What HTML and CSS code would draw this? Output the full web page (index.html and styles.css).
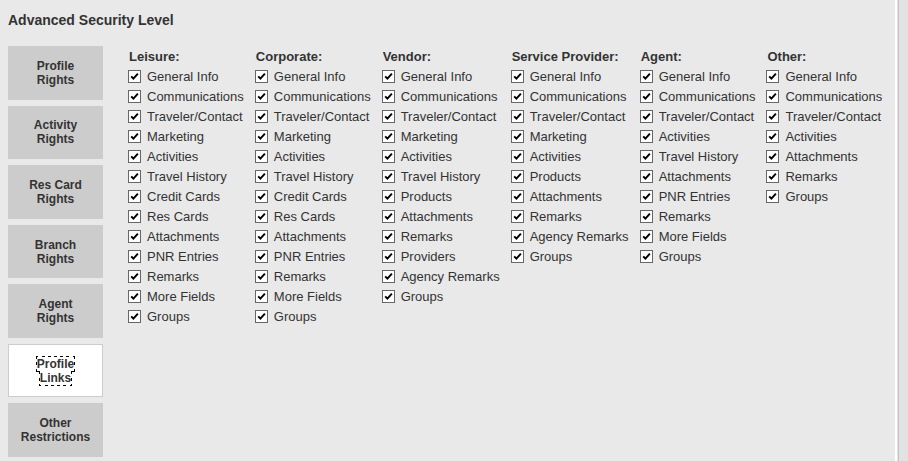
FILE: index.html
```
<!DOCTYPE html>
<html lang="en">
<head>
<meta charset="utf-8">
<title>Advanced Security Level</title>
<link rel="stylesheet" href="styles.css">
</head>
<body>
<main class="panel">
<h1 class="title">Advanced Security Level</h1>
<div class="content">
<nav class="tabs">
<button type="button" class="tab"><span>Profile<br>Rights</span></button>
<button type="button" class="tab"><span>Activity<br>Rights</span></button>
<button type="button" class="tab"><span>Res Card<br>Rights</span></button>
<button type="button" class="tab"><span>Branch<br>Rights</span></button>
<button type="button" class="tab"><span>Agent<br>Rights</span></button>
<button type="button" class="tab tab-active"><span><span class="focus-text">Profile<br>Links</span></span></button>
<button type="button" class="tab"><span>Other<br>Restrictions</span></button>
</nav>
<form class="groups">
<fieldset class="group">
<legend>Leisure:</legend>
<label><input type="checkbox" checked>General Info</label>
<label><input type="checkbox" checked>Communications</label>
<label><input type="checkbox" checked>Traveler/Contact</label>
<label><input type="checkbox" checked>Marketing</label>
<label><input type="checkbox" checked>Activities</label>
<label><input type="checkbox" checked>Travel History</label>
<label><input type="checkbox" checked>Credit Cards</label>
<label><input type="checkbox" checked>Res Cards</label>
<label><input type="checkbox" checked>Attachments</label>
<label><input type="checkbox" checked>PNR Entries</label>
<label><input type="checkbox" checked>Remarks</label>
<label><input type="checkbox" checked>More Fields</label>
<label><input type="checkbox" checked>Groups</label>
</fieldset>
<fieldset class="group">
<legend>Corporate:</legend>
<label><input type="checkbox" checked>General Info</label>
<label><input type="checkbox" checked>Communications</label>
<label><input type="checkbox" checked>Traveler/Contact</label>
<label><input type="checkbox" checked>Marketing</label>
<label><input type="checkbox" checked>Activities</label>
<label><input type="checkbox" checked>Travel History</label>
<label><input type="checkbox" checked>Credit Cards</label>
<label><input type="checkbox" checked>Res Cards</label>
<label><input type="checkbox" checked>Attachments</label>
<label><input type="checkbox" checked>PNR Entries</label>
<label><input type="checkbox" checked>Remarks</label>
<label><input type="checkbox" checked>More Fields</label>
<label><input type="checkbox" checked>Groups</label>
</fieldset>
<fieldset class="group">
<legend>Vendor:</legend>
<label><input type="checkbox" checked>General Info</label>
<label><input type="checkbox" checked>Communications</label>
<label><input type="checkbox" checked>Traveler/Contact</label>
<label><input type="checkbox" checked>Marketing</label>
<label><input type="checkbox" checked>Activities</label>
<label><input type="checkbox" checked>Travel History</label>
<label><input type="checkbox" checked>Products</label>
<label><input type="checkbox" checked>Attachments</label>
<label><input type="checkbox" checked>Remarks</label>
<label><input type="checkbox" checked>Providers</label>
<label><input type="checkbox" checked>Agency Remarks</label>
<label><input type="checkbox" checked>Groups</label>
</fieldset>
<fieldset class="group">
<legend>Service Provider:</legend>
<label><input type="checkbox" checked>General Info</label>
<label><input type="checkbox" checked>Communications</label>
<label><input type="checkbox" checked>Traveler/Contact</label>
<label><input type="checkbox" checked>Marketing</label>
<label><input type="checkbox" checked>Activities</label>
<label><input type="checkbox" checked>Products</label>
<label><input type="checkbox" checked>Attachments</label>
<label><input type="checkbox" checked>Remarks</label>
<label><input type="checkbox" checked>Agency Remarks</label>
<label><input type="checkbox" checked>Groups</label>
</fieldset>
<fieldset class="group">
<legend>Agent:</legend>
<label><input type="checkbox" checked>General Info</label>
<label><input type="checkbox" checked>Communications</label>
<label><input type="checkbox" checked>Traveler/Contact</label>
<label><input type="checkbox" checked>Activities</label>
<label><input type="checkbox" checked>Travel History</label>
<label><input type="checkbox" checked>Attachments</label>
<label><input type="checkbox" checked>PNR Entries</label>
<label><input type="checkbox" checked>Remarks</label>
<label><input type="checkbox" checked>More Fields</label>
<label><input type="checkbox" checked>Groups</label>
</fieldset>
<fieldset class="group">
<legend>Other:</legend>
<label><input type="checkbox" checked>General Info</label>
<label><input type="checkbox" checked>Communications</label>
<label><input type="checkbox" checked>Traveler/Contact</label>
<label><input type="checkbox" checked>Activities</label>
<label><input type="checkbox" checked>Attachments</label>
<label><input type="checkbox" checked>Remarks</label>
<label><input type="checkbox" checked>Groups</label>
</fieldset>
</form>
</div>
</main>
<div class="gutter"></div>
</body>
</html>
```
FILE: styles.css
```
* {
  box-sizing: border-box;
}

body {
  margin: 0;
  min-height: 100vh;
  display: flex;
  background: #e9e9e9;
  color: #333;
  font: 13px/20px "Liberation Sans", Arial, sans-serif;
}

.panel {
  flex: 1;
  display: flex;
  flex-direction: column;
  padding: 10px 0 4px 8px;
  border-right: 2px solid #fff;
}

.gutter {
  width: 11px;
  background: #e2e2e2;
  border-left: 1px solid #e4e4e4;
  box-shadow: inset 1px 0 #c4c4c4;
}

.title {
  margin: 0 0 16px;
  font-size: 14px;
  line-height: 20px;
}

.content {
  flex: 1;
  display: flex;
  gap: 25px;
}

.tabs {
  flex: none;
  width: 95px;
  display: flex;
  flex-direction: column;
  gap: 6px;
}

.tab {
  flex: 1;
  padding: 0;
  border: 1px solid #ccc;
  background: #ccc;
  color: #333;
  font: bold 12px/14px "Liberation Sans", Arial, sans-serif;
  text-align: center;
}

.tab-active {
  background: #fff;
}

.focus-text {
  outline: 1px dotted #000;
}

.groups {
  display: flex;
  align-items: flex-start;
  gap: 11px;
  padding-top: 1px;
}

.group {
  min-width: 0;
  margin: 0;
  padding: 0;
  border: 0;
}

.group legend {
  padding: 0 0 0 1px;
  font-weight: bold;
}

.group label {
  display: flex;
  align-items: center;
  gap: 6px;
  white-space: nowrap;
}

.group input {
  appearance: none;
  flex: none;
  width: 13px;
  height: 13px;
  margin: 0 0 1px;
  border: 1px solid #666;
  background: #fff;
}

.group input:checked {
  background-image: url("data:image/svg+xml,%3Csvg xmlns='http://www.w3.org/2000/svg' viewBox='0 0 11 11'%3E%3Cpath d='M2.2 5.4 4.4 7.7 8.9 2.6' fill='none' stroke='%23000' stroke-width='1.9'/%3E%3C/svg%3E");
}
```
